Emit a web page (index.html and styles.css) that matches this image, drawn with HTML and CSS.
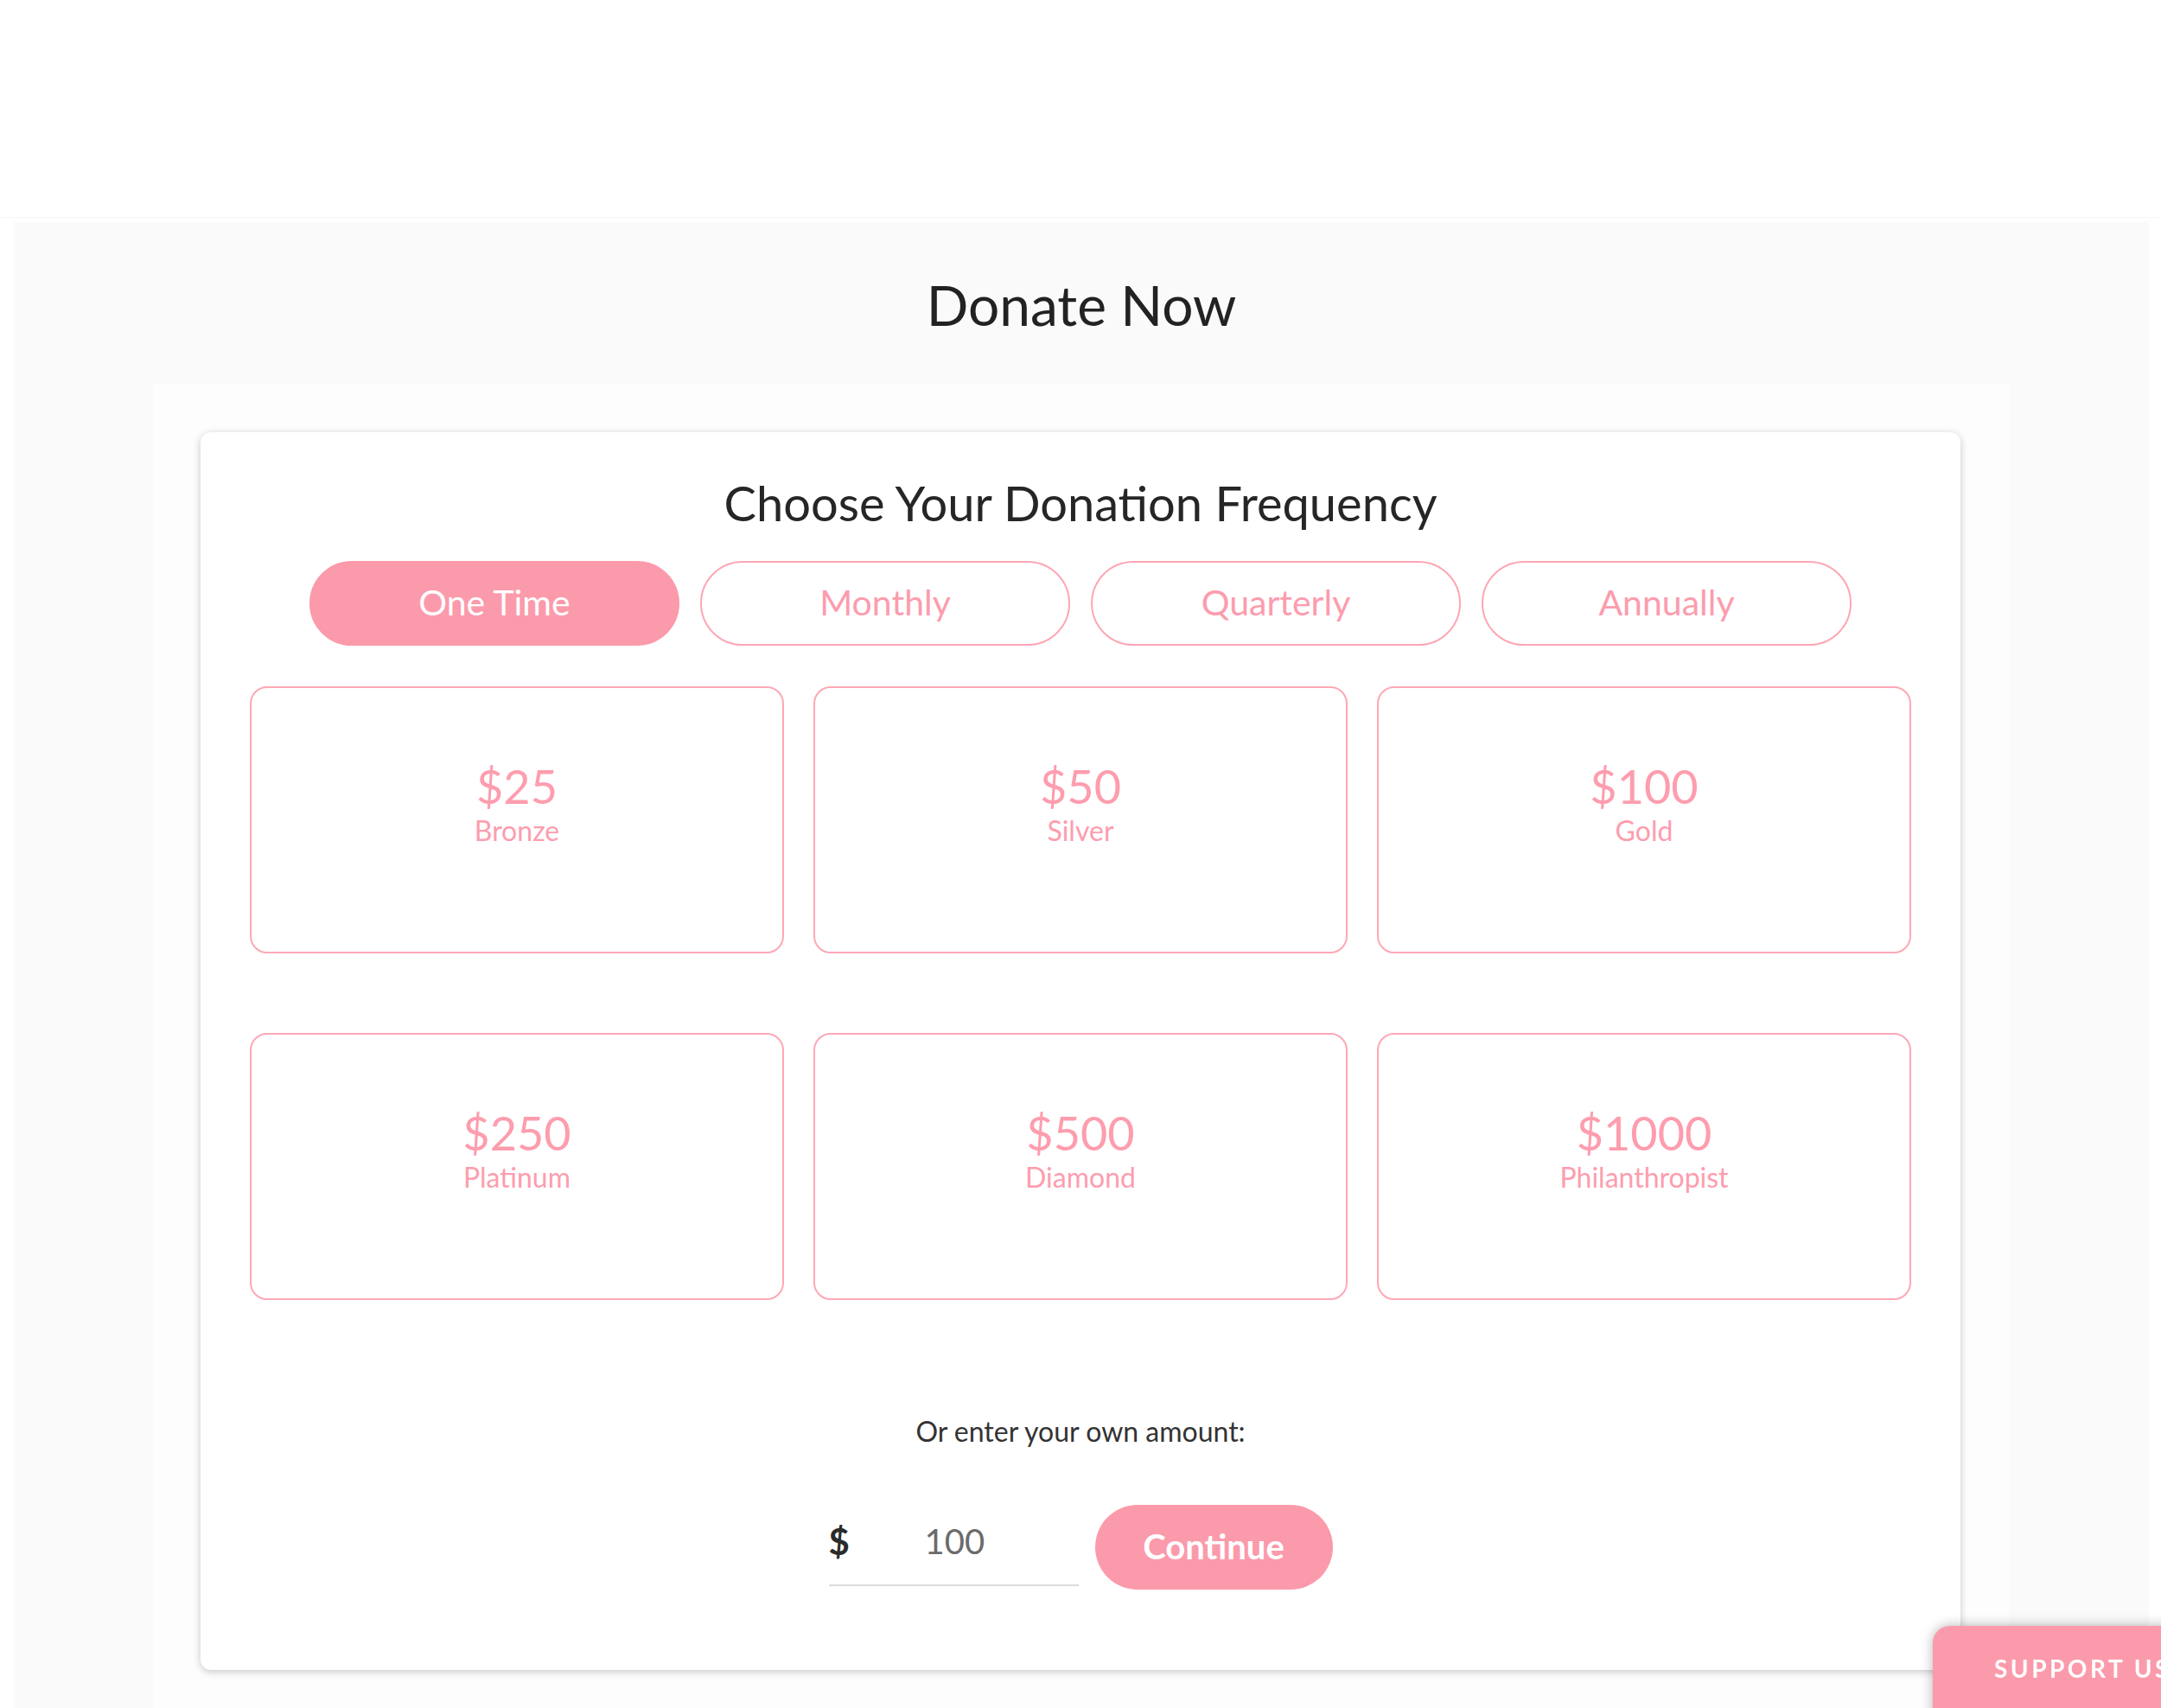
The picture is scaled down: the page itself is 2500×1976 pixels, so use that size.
FILE: index.html
```html
<!DOCTYPE html>
<html lang="en">
<head>
<meta charset="utf-8">
<title>Donate Now</title>
<link rel="stylesheet" href="styles.css">
</head>
<body>
<header class="topbar"></header>
<main class="section">
  <h1 class="page-title">Donate Now</h1>
  <div class="inner">
    <div class="donate-card">
      <h2 class="freq-title">Choose Your Donation Frequency</h2>
      <div class="tabs">
        <button class="tab active">One Time</button>
        <button class="tab">Monthly</button>
        <button class="tab">Quarterly</button>
        <button class="tab">Annually</button>
      </div>
      <div class="tiers">
        <div class="tier"><div class="tier-amount">$25</div><div class="tier-name">Bronze</div></div>
        <div class="tier"><div class="tier-amount">$50</div><div class="tier-name">Silver</div></div>
        <div class="tier"><div class="tier-amount">$100</div><div class="tier-name">Gold</div></div>
        <div class="tier"><div class="tier-amount">$250</div><div class="tier-name">Platinum</div></div>
        <div class="tier"><div class="tier-amount">$500</div><div class="tier-name">Diamond</div></div>
        <div class="tier"><div class="tier-amount">$1000</div><div class="tier-name">Philanthropist</div></div>
      </div>
      <p class="own-label">Or enter your own amount:</p>
      <div class="amount-row">
        <label class="amount-field">
          <span class="dollar">$</span>
          <input class="amount-input" type="text" value="100">
        </label>
        <button class="continue">Continue</button>
      </div>
    </div>
  </div>
</main>
<div class="support-tab">SUPPORT US</div>
</body>
</html>
```
FILE: styles.css
```css
html, body {
  margin: 0;
  padding: 0;
  height: 1976px;
  overflow: hidden;
  background: #ffffff;
  font-family: "Lato", "Open Sans", "Liberation Sans", sans-serif;
}

.topbar {
  height: 251px;
  border-bottom: 1px solid #f7f7f7;
  margin-bottom: 5px;
}

.section {
  margin: 0 14px 0 16px;
  background: #fafafa;
  height: 1719px;
  padding-top: 58px;
  box-sizing: border-box;
}

.page-title {
  margin: 0;
  text-align: center;
  font-size: 64px;
  line-height: 1.2;
  font-weight: 400;
  color: #222;
}

.inner {
  margin: 53px 0 0 161px;
  width: 2147px;
  background: #fdfdfd;
  padding: 55px 0 0 55px;
  box-sizing: border-box;
  height: 1600px;
}

.donate-card {
  width: 2036px;
  height: 1432px;
  box-sizing: border-box;
  background: #ffffff;
  border-radius: 12px;
  box-shadow: 0 2px 10px rgba(0, 0, 0, 0.22);
  padding: 48px 57px 0;
  display: flex;
  flex-direction: column;
  align-items: center;
}

.freq-title {
  margin: 0;
  font-size: 56px;
  line-height: 1.2;
  font-weight: 400;
  color: #262626;
}

.tabs {
  margin-top: 34px;
  display: flex;
  gap: 24px;
}

.tab {
  width: 428px;
  height: 98px;
  border-radius: 49px;
  border: 2px solid #fda6b4;
  background: #ffffff;
  color: #fc9cad;
  font-family: inherit;
  font-size: 41px;
  padding: 0 0 2px;
}

.tab.active {
  background: #fb9aab;
  border-color: #fb9aab;
  color: #ffffff;
}

.tiers {
  margin-top: 47px;
  width: 100%;
  display: grid;
  grid-template-columns: repeat(3, 1fr);
  column-gap: 34px;
  row-gap: 92px;
}

.tier {
  height: 309px;
  box-sizing: border-box;
  border: 2px solid #fda8b6;
  border-radius: 20px;
  padding-top: 82px;
  text-align: center;
  color: #fd9dae;
}

.tier-amount {
  font-size: 54px;
  line-height: 1.2;
}

.tier-name {
  font-size: 32px;
  line-height: 1.15;
}

.own-label {
  margin: 133px 0 0;
  font-size: 32px;
  line-height: 1.2;
  color: #333;
}

.amount-row {
  margin-top: 66px;
  display: flex;
  align-items: flex-start;
  gap: 19px;
}

.amount-field {
  width: 289px;
  height: 94px;
  box-sizing: border-box;
  padding-bottom: 8px;
  border-bottom: 2px solid #dcdcdc;
  display: flex;
  align-items: center;
}

.dollar {
  font-size: 42px;
  font-weight: 700;
  color: #2b2b2b;
  width: 111px;
}

.amount-input {
  width: 170px;
  border: none;
  outline: none;
  padding: 0;
  background: transparent;
  font-family: inherit;
  font-size: 40px;
  color: #6b6b6b;
}

.continue {
  width: 275px;
  height: 98px;
  border: none;
  border-radius: 49px;
  background: #fb9aab;
  color: #ffffff;
  font-family: inherit;
  font-size: 40px;
  font-weight: 700;
  padding: 0 0 2px;
}

.support-tab {
  position: fixed;
  left: 2236px;
  top: 1881px;
  width: 400px;
  height: 200px;
  box-sizing: border-box;
  padding: 33px 0 0 71px;
  background: #fb9aab;
  border-radius: 20px 0 0 0;
  box-shadow: 0 0 14px rgba(0, 0, 0, 0.3);
  color: #ffffff;
  font-size: 28px;
  line-height: 1.2;
  font-weight: 700;
  letter-spacing: 3.5px;
  white-space: nowrap;
}
```
